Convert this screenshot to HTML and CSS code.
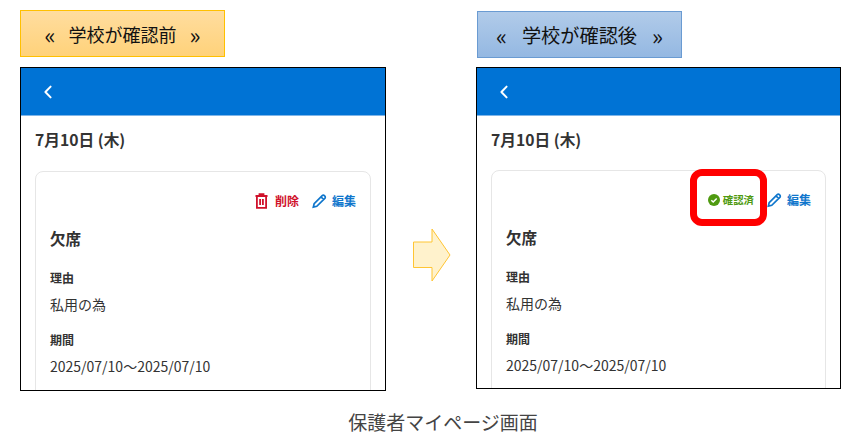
FILE: index.html
```html
<!DOCTYPE html>
<html lang="ja">
<head>
<meta charset="utf-8">
<title>保護者マイページ画面</title>
<link rel="stylesheet" href="styles.css">
</head>
<body>
<main class="stage">
  <section class="col col-before">
    <div class="tag tag-before"><span class="q">«</span><span>学校が確認前</span><span class="q">»</span></div>
    <div class="phone phone-before">
      <div class="bar"><svg class="back" viewBox="0 0 10 14"><path d="M7.6 1.6 2.4 7l5.2 5.4"/></svg></div>
      <div class="content">
        <h2 class="date">7月10日 (木)</h2>
        <div class="card">
          <div class="actions">
            <span class="act del"><svg class="ico" viewBox="0 0 14 16"><path d="M1 3h12M5 3V1.2h4V3M2.4 3v11.8h9.2V3M5.6 6v6M8.4 6v6"/></svg>削除</span>
            <span class="act edit"><svg class="ico" viewBox="0 0 16 16"><path d="M1.4 14.6l.9-3.7 8.6-8.6a1.6 1.6 0 0 1 2.3 0l.5.5a1.6 1.6 0 0 1 0 2.3l-8.6 8.6zM9.6 3.6l2.8 2.8"/></svg>編集</span>
          </div>
          <h3 class="kind">欠席</h3>
          <h4 class="lab">理由</h4>
          <p class="val">私用の為</p>
          <h4 class="lab">期間</h4>
          <p class="val">2025/07/10～2025/07/10</p>
        </div>
      </div>
    </div>
  </section>
  <svg class="arrow" viewBox="0 0 38 54"><path d="M.5 14h18.500V1l18 26-18 26V39.500H.5z"/></svg>
  <section class="col col-after">
    <div class="tag tag-after"><span class="q">«</span><span>学校が確認後</span><span class="q">»</span></div>
    <div class="phone phone-after">
      <div class="bar"><svg class="back" viewBox="0 0 10 14"><path d="M7.6 1.6 2.4 7l5.2 5.4"/></svg></div>
      <div class="content">
        <h2 class="date">7月10日 (木)</h2>
        <div class="card">
          <div class="actions">
            <span class="act ok"><svg class="ico-ok" viewBox="0 0 12 12"><circle cx="6" cy="6" r="6"/><path d="M3.3 6.2 5.2 8l3.500-3.600"/></svg>確認済</span>
            <span class="act edit"><svg class="ico" viewBox="0 0 16 16"><path d="M1.4 14.6l.9-3.7 8.6-8.6a1.6 1.6 0 0 1 2.3 0l.5.5a1.6 1.6 0 0 1 0 2.3l-8.6 8.6zM9.6 3.6l2.8 2.8"/></svg>編集</span>
          </div>
          <h3 class="kind">欠席</h3>
          <h4 class="lab">理由</h4>
          <p class="val">私用の為</p>
          <h4 class="lab">期間</h4>
          <p class="val">2025/07/10～2025/07/10</p>
        </div>
      </div>
      <div class="mark"></div>
    </div>
  </section>
</main>
<p class="caption">保護者マイページ画面</p>
</body>
</html>
```
FILE: styles.css
```css
* { box-sizing: border-box; }
html, body { margin: 0; padding: 0; background: #fff; }
body {
  width: 862px;
  height: 447px;
  overflow: hidden;
  font-family: "Noto Sans CJK JP", "Noto Sans", sans-serif;
  color: #333;
}
.stage { display: flex; align-items: flex-start; padding: 10px 0 0 20px; }
.col { display: flex; flex-direction: column; }
.col-before { width: 366px; }
.col-after { width: 365px; margin-left: 25px; }
.arrow {
  width: 38px;
  height: 54px;
  margin: 218px 0 0 27px;
  flex: none;
}
.arrow path { fill: #fff2cc; stroke: #ffc533; stroke-width: 1; }

.tag {
  width: 205px;
  height: 47px;
  display: flex;
  align-items: center;
  justify-content: center;
  color: #111;
  font-size: 18px;
  border: 1px solid;
}
.q { font-size: 23px; line-height: 30px; }
.tag-before {
  gap: 13px;
  background: linear-gradient(#ffdd9f, #ffd27a);
  border-color: #ffc000;
  margin-bottom: 10px;
}
.tag-after {
  gap: 15px;
  margin: 1px 0 9px 1px;
  font-size: 19.2px;
  background: linear-gradient(#b1cbe9, #94b8e2);
  border-color: #6a9bd2;
}

.phone {
  position: relative;
  width: 100%;
  border: 1px solid #000;
  overflow: hidden;
}
.phone-before { height: 324px; }
.phone-after { height: 322px; }
.bar {
  height: 47px;
  background: #0073d5;
  display: flex;
  align-items: center;
  padding-left: 22px;
  box-shadow: 0 1px 0 #7fb5e8;
}
.back { width: 10px; height: 14px; }
.back path { fill: none; stroke: #fff; stroke-width: 2; stroke-linecap: round; stroke-linejoin: round; }

.content { padding: 13px 14px 0; }
.date {
  margin: 0 0 18.5px;
  font-size: 15.7px;
  line-height: 24px;
  font-weight: 700;
  color: #333;
}
.card {
  border: 1px solid #e6e6e6;
  border-radius: 8px;
  padding: 19px 14px 0;
  height: 260px;
}
.phone-after .card { margin-top: -1px; }
.actions {
  display: flex;
  justify-content: flex-end;
  align-items: center;
  gap: 13px;
  height: 20px;
  font-size: 12px;
  font-weight: 700;
}
.act { display: inline-flex; align-items: center; gap: 5px; }
.del { color: #d0112b; }
.del .ico { margin-right: 1px; margin-left: -1px; stroke-width: 1.8; }
.edit { color: #0f76cc; }
.edit .ico { stroke-width: 1.8; }
.ok { color: #4f9a10; font-size: 10.4px; gap: 3px; }
.ico { width: 15px; height: 16px; fill: none; stroke: currentColor; stroke-width: 1.5; }
.ico-ok { width: 12px; height: 12px; }
.ico-ok circle { fill: #4f9a10; }
.ico-ok path { fill: none; stroke: #fff; stroke-width: 1.5; }

.kind {
  margin: 15px 0 0;
  font-size: 15.5px;
  line-height: 24px;
  font-weight: 700;
}
.lab {
  margin: 19px 0 0;
  font-size: 12px;
  line-height: 18px;
  font-weight: 700;
}
.val {
  margin: 6px 0 0;
  font-size: 14px;
  line-height: 22px;
  font-weight: 400;
}
.val + .lab { margin-top: 16px; }
.mark {
  position: absolute;
  left: 213px;
  top: 101px;
  width: 77px;
  height: 57px;
  border: 7px solid #f00;
  border-radius: 12px;
}
.caption {
  margin: 20px 0 0;
  text-align: center;
  font-size: 19px;
  line-height: 22px;
  color: #444;
  padding-left: 24px;
}
```
